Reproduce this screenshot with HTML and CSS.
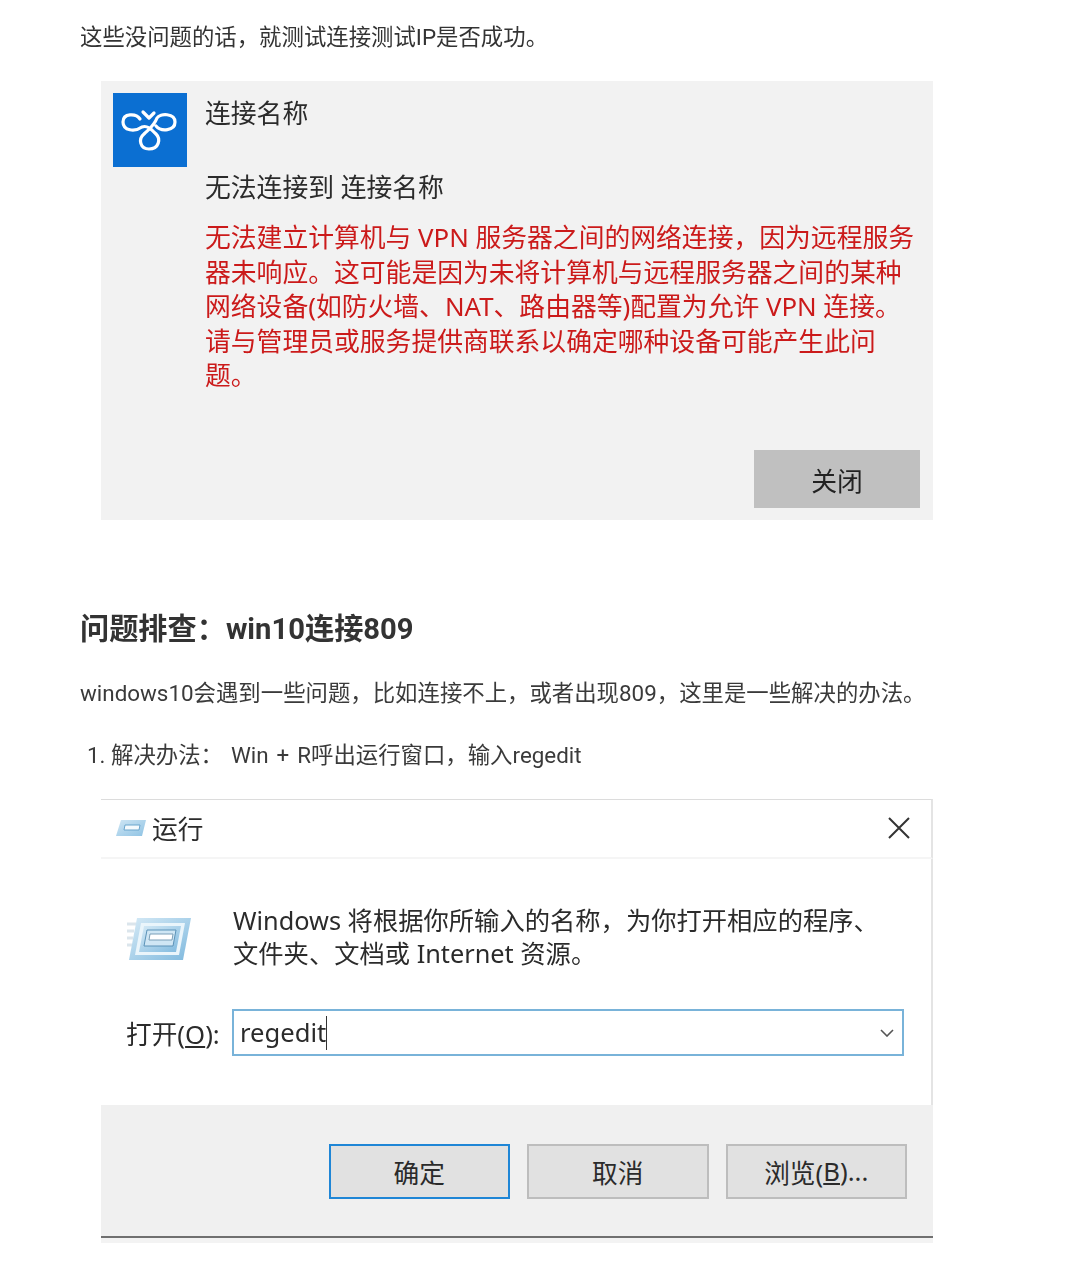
FILE: index.html
```html
<!DOCTYPE html>
<html lang="zh-CN">
<head>
<meta charset="utf-8">
<title>问题排查</title>
<link rel="stylesheet" href="styles.css">
</head>
<body>
<main class="article">
  <p class="para first">这些没问题的话，就测试连接测试IP是否成功。</p>

  <section class="vpn">
    <div class="vpn-icon">
      <svg width="74" height="74" viewBox="0 0 74 74" fill="none" stroke="#fff" stroke-width="3.2" stroke-linecap="round" stroke-linejoin="round">
        <path d="M27 26 C23 20 10 20 10 29 C10 38 22 39 29 34 C34 32 38 36 43 41 C48 46 46 56 36 56 C27 56 25 46 31 41 C36 36 41 33 44 25 C47 20 62 20 62 29 C62 38 48 39 43 33"/>
        <path d="M30 19 L36 25 L41 20"/>
      </svg>
    </div>
    <div class="vpn-body">
      <h2 class="vpn-title">连接名称</h2>
      <p class="vpn-sub">无法连接到 连接名称</p>
      <p class="vpn-error">无法建立计算机与 VPN 服务器之间的网络连接，因为远程服务器未响应。这可能是因为未将计算机与远程服务器之间的某种网络设备(如防火墙、NAT、路由器等)配置为允许 VPN 连接。请与管理员或服务提供商联系以确定哪种设备可能产生此问题。</p>
      <div class="vpn-actions"><span class="vpn-close">关闭</span></div>
    </div>
  </section>

  <h3 class="heading">问题排查：win10连接809</h3>
  <p class="para intro">windows10会遇到一些问题，比如连接不上，或者出现809，这里是一些解决的办法。</p>
  <ol class="steps"><li><span class="step-text">解决办法： Win + R呼出运行窗口，输入regedit</span></li></ol>

  <section class="run">
    <header class="run-bar">
      <svg class="run-mini" width="32" height="20" viewBox="0 0 32 20">
        <defs>
          <linearGradient id="miniFill" x1="0" y1="0" x2="1" y2="1">
            <stop offset="0" stop-color="#cfe6f4"/>
            <stop offset="1" stop-color="#8fc3e4"/>
          </linearGradient>
        </defs>
        <path d="M6 2 H31 L27 18 H1 Z" fill="url(#miniFill)"/>
        <path d="M10 7 H25 L24 12 H9 Z" fill="#f4fafd" stroke="#6ba6cd"/>
      </svg>
      <span class="run-name">运行</span>
      <svg class="run-x" width="22" height="22" viewBox="0 0 22 22" stroke="#333" stroke-width="2"><path d="M1 1 L21 21 M21 1 L1 21"/></svg>
    </header>
    <div class="run-main">
      <div class="run-intro">
        <svg class="run-big" width="66" height="46" viewBox="0 0 66 46" fill="none">
          <defs>
            <linearGradient id="bigFill" x1="0" y1="0" x2="1" y2="1">
              <stop offset="0" stop-color="#d6eaf6"/>
              <stop offset="1" stop-color="#7fb9de"/>
            </linearGradient>
          </defs>
          <path d="M1 8 H10 M1 15 H8 M1 22 H7 M1 29 H6" stroke="#dbe5ec" stroke-width="3"/>
          <path d="M11 2 H65 L57 44 H3 Z" fill="url(#bigFill)"/>
          <path d="M15 7 H59 L53 39 H9 Z" fill="#eaf5fb"/>
          <path d="M18 10 H55 L50 36 H13 Z" fill="url(#bigFill)"/>
          <path d="M21 14 H50 L47 30 H18 Z" fill="#cfe6f4" stroke="#5c93b8"/>
          <path d="M24 18 H47 L46 24 H23 Z" fill="#fff" stroke="#7a9fb8"/>
        </svg>
        <p class="run-text">Windows 将根据你所输入的名称，为你打开相应的程序、<br>文件夹、文档或 Internet 资源。</p>
      </div>
      <div class="run-open">
        <span class="run-label">打开(<u>O</u>):</span>
        <div class="run-input">
          <span class="run-value">regedit</span>
          <svg class="run-chev" width="14" height="8" viewBox="0 0 14 8" fill="none" stroke="#555" stroke-width="1.6"><path d="M1 1 L7 7 L13 1"/></svg>
        </div>
      </div>
    </div>
    <footer class="run-foot">
      <span class="run-btn primary">确定</span>
      <span class="run-btn">取消</span>
      <span class="run-btn">浏览(<u>B</u>)...</span>
    </footer>
  </section>
</main>
</body>
</html>
```
FILE: styles.css
```css
* { box-sizing: border-box; }
html, body { margin: 0; padding: 0; background: #fff; }
body {
  width: 1084px;
  height: 1280px;
  overflow: hidden;
  font-family: Roboto, "Noto Sans CJK SC", sans-serif;
  color: #3a3a3a;
}
.article { padding: 21px 0 0 80px; filter: blur(0.5px); }
.para { margin: 0; font-size: 22.4px; line-height: 32px; white-space: nowrap; }
.first { color: #333; }

.vpn {
  margin: 28px 0 0 21px;
  width: 832px;
  height: 439px;
  background: #f2f2f2;
  display: flex;
  padding: 12px 13px 12px 12px;
  gap: 18px;
  font-family: "Noto Sans", "Noto Sans CJK SC", sans-serif;
}
.vpn-icon { width: 74px; height: 74px; background: #0b6fd2; flex: none; }
.vpn-icon svg { display: block; }
.vpn-body { flex: 1; display: flex; flex-direction: column; min-width: 0; }
.vpn-title { margin: 0; font-size: 25.8px; font-weight: 400; line-height: 40px; color: #2b2b2b; }
.vpn-sub { margin: 34px 0 0; font-size: 25.8px; line-height: 40px; color: #2b2b2b; }
.vpn-error { margin: 13px 0 0; font-size: 25.8px; line-height: 34.5px; color: #cb1a1a; }
.vpn-actions { margin-top: auto; display: flex; justify-content: flex-end; }
.vpn-close {
  width: 166px; height: 58px; background: #c0c0c0; color: #222;
  font-size: 25.8px; padding-top: 2px; display: flex; align-items: center; justify-content: center;
}

.heading {
  margin: 89px 0 0;
  font-size: 29.2px;
  line-height: 40px;
  font-weight: 700;
  color: #333;
}
.intro { margin-top: 28px; }
.steps { margin: 30px 0 0; padding: 0 0 0 31px; font-size: 22.4px; line-height: 32px; white-space: nowrap; }
.steps li::marker { color: #3a3a3a; }
.step-text { word-spacing: 2.4px; }

.run {
  margin: 28px 0 0 21px;
  width: 832px;
  height: 444px;
  display: flex;
  flex-direction: column;
  font-family: "Noto Sans", "Noto Sans CJK SC", sans-serif;
  color: #2b2b2b;
}
.run-bar {
  height: 60px;
  flex: none;
  display: flex;
  align-items: center;
  padding: 0 21px 2px 14px;
  border-top: 1px solid #dcdcdc;
  border-right: 2px solid #e4e4e4;
  border-bottom: 2px solid #f5f5f5;
}
.run-mini { flex: none; }
.run-name { margin-left: 5px; font-size: 25.7px; }
.run-x { margin-left: auto; }
.run-main { flex: 1; padding: 45px 27px 0 25px; border-right: 2px solid #e4e4e4; }
.run-intro { display: flex; gap: 41px; align-items: center; }
.run-big { flex: none; margin-top: 3px; }
.run-text { margin: 0; font-size: 25.3px; line-height: 33px; white-space: nowrap; }
.run-open { margin-top: 39px; display: flex; align-items: center; gap: 11px; }
.run-label { font-size: 25.7px; line-height: 34px; width: 95px; white-space: nowrap; padding-top: 4px; }
.run-input {
  flex: 1; height: 47px;
  border: 2px solid #79b3d9;
  display: flex; align-items: center; justify-content: space-between;
  padding: 0 8px 0 6px;
}
.run-value { font-size: 25.6px; border-right: 1px solid #333; line-height: 34px; }
.run-foot {
  height: 138px;
  flex: none;
  background: linear-gradient(to top, #f3f3f3 5px, #707070 5px, #707070 7px, #f0f0f0 7px);
  display: flex;
  justify-content: flex-end;
  gap: 17px;
  padding: 39px 26px 0 0;
}
.run-btn {
  width: 181.5px; height: 55px;
  background: #e1e1e1;
  border: 2px solid #bdbdbd;
  font-size: 25.7px;
  display: flex; align-items: center; justify-content: center;
}
.run-btn.primary { border-color: #1f86d6; }
```
